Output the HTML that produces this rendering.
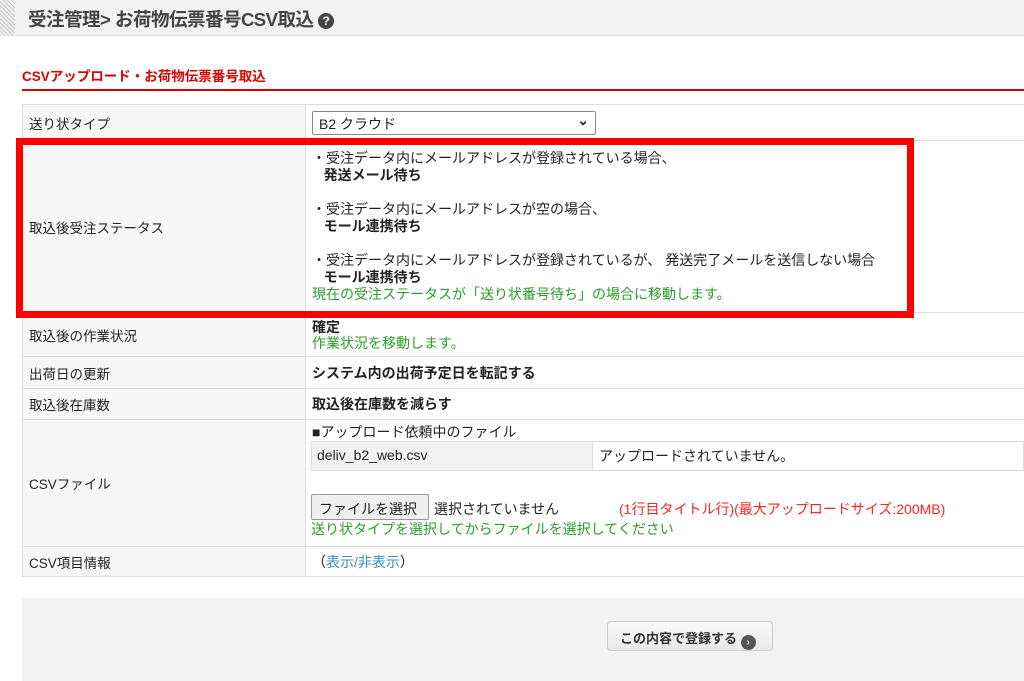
<!DOCTYPE html>
<html><head><meta charset="utf-8"><style>
*{margin:0;padding:0;box-sizing:border-box}
body{width:1024px;height:681px;overflow:hidden;background:#fff;font-family:"Liberation Sans","Noto Sans CJK JP",sans-serif;font-size:14px;color:#222;position:relative}
.a{position:absolute;white-space:nowrap}
.hd{left:0;top:0;width:1024px;height:36px;background:#f2f2f2;border-bottom:1px solid #ddd}
.stripe{left:0;top:0;width:15px;height:36px;background:repeating-linear-gradient(45deg,#ccc 0 1px,#eee 1px 3px)}
table{position:absolute;left:22px;top:104px;width:1010px;border-collapse:collapse}
td{border:1px solid #ddd;vertical-align:middle;padding:0 6px}
td.l{width:283px;background:#f7f7f7;font-size:13.5px}
.g{color:#2a9d2a}.r{color:#f22}.b{font-weight:bold}
</style></head><body>
<div class="a hd"></div><div class="a stripe"></div>
<div class="a" style="left:28px;top:6px;font-size:18.5px;font-weight:bold;color:#444;letter-spacing:-0.5px">受注管理&gt; お荷物伝票番号CSV取込 <span style="display:inline-block;width:16px;height:16px;border-radius:50%;background:#444;color:#fff;font-size:12px;text-align:center;line-height:16px;vertical-align:1px;letter-spacing:0">?</span></div>
<div class="a" style="left:22px;top:65px;font-size:13.5px;font-weight:bold;color:#d00">CSVアップロード・お荷物伝票番号取込</div>
<div class="a" style="left:22px;top:89px;width:1002px;height:2px;background:#d00"></div>
<table>
<tr style="height:36px"><td class="l">送り状タイプ</td><td><div style="width:284px;height:24px;border:1px solid #888;border-radius:2px;padding:2px 6px;position:relative">B2 クラウド<span style="position:absolute;right:6px;top:0px;font-size:14px;font-weight:bold">⌄</span></div></td></tr>
<tr style="height:172px"><td class="l">取込後受注ステータス</td><td style="line-height:17px">・受注データ内にメールアドレスが登録されている場合、<br>&nbsp;&nbsp;&nbsp;<b>発送メール待ち</b><br><br>・受注データ内にメールアドレスが空の場合、<br>&nbsp;&nbsp;&nbsp;<b>モール連携待ち</b><br><br>・受注データ内にメールアドレスが登録されているが、 発送完了メールを送信しない場合<br>&nbsp;&nbsp;&nbsp;<b>モール連携待ち</b><br><span class="g">現在の受注ステータスが「送り状番号待ち」の場合に移動します。</span></td></tr>
<tr style="height:44px"><td class="l">取込後の作業状況</td><td style="line-height:16px"><b>確定</b><br><span class="g">作業状況を移動します。</span></td></tr>
<tr style="height:32px"><td class="l">出荷日の更新</td><td class="b">システム内の出荷予定日を転記する</td></tr>
<tr style="height:31px"><td class="l">取込後在庫数</td><td class="b">取込後在庫数を減らす</td></tr>
<tr style="height:127px"><td class="l">CSVファイル</td><td></td></tr>
<tr style="height:30px"><td class="l">CSV項目情報</td><td>（<span style="color:#3a8cc8">表示/非表示</span>）</td></tr>
</table>
<div class="a" style="left:312px;top:422px">■アップロード依頼中のファイル</div>
<div class="a" style="left:311px;top:441px;width:713px;height:30px;border:1px solid #ddd;background:#fff"></div>
<div class="a" style="left:312px;top:442px;width:281px;height:28px;background:#f2f2f2;border-right:1px solid #ddd;padding:5px 5px">deliv_b2_web.csv</div>
<div class="a" style="left:599px;top:446px">アップロードされていません。</div>
<div class="a" style="left:311px;top:494px;width:118px;height:26px;border:1px solid #999;border-radius:2px;background:#efefef;padding:4px 7px">ファイルを選択</div>
<div class="a" style="left:434px;top:499px">選択されていません</div>
<div class="a r" style="left:619px;top:499px">(1行目タイトル行)(最大アップロードサイズ:200MB)</div>
<div class="a g" style="left:311px;top:519px">送り状タイプを選択してからファイルを選択してください</div>
<div class="a" style="left:22px;top:598px;width:1002px;height:83px;background:#f2f2f2"></div>
<div class="a" style="left:607px;top:621px;width:166px;height:30px;border:1px solid #ccc;border-radius:4px;background:linear-gradient(#fafafa,#e8e8e8);font-weight:bold;color:#333;font-size:13px;padding:6px 0 0 12px">この内容で登録する <span style="display:inline-block;width:15px;height:15px;border-radius:50%;background:#555;color:#fff;font-size:10px;text-align:center;line-height:15px;vertical-align:-2px">›</span></div>
<div class="a" style="left:16px;top:138px;width:898px;height:180px;border:7px solid #f00"></div>
</body></html>
